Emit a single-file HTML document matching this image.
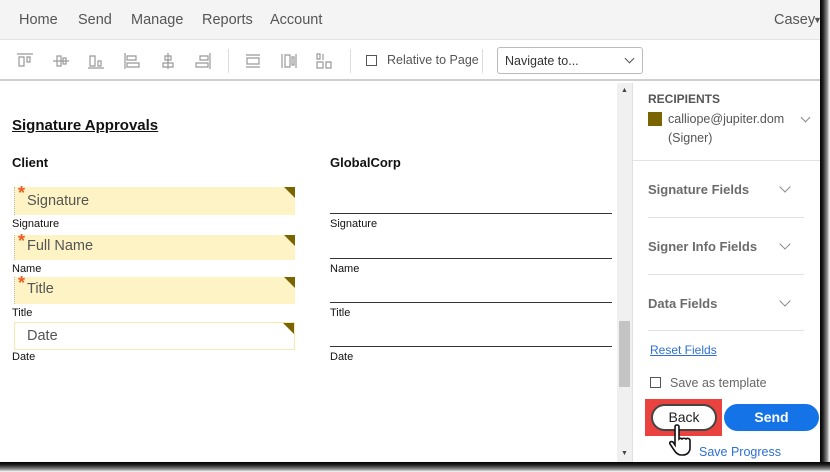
<!DOCTYPE html>
<html><head><style>
*{margin:0;padding:0;box-sizing:border-box}
body{width:830px;height:472px;background:#fff;font-family:"Liberation Sans",sans-serif;position:relative;overflow:hidden}
.abs{position:absolute}
.nav{left:0;top:0;width:822px;height:40px;background:#f4f4f4;border-bottom:1px solid #e2e2e2}
.nav span{position:absolute;top:12px;font-size:14.5px;color:#555}
.tb{left:0;top:40px;width:822px;height:41px;background:#fff;border-bottom:2px solid #cfcfcf}
.ic{position:absolute;top:12px;width:18px;height:18px;color:#999}
.doc{left:0;top:83px;width:617px;height:380px;background:#fff}
.lbl{position:absolute;font-size:11px;color:#111}
.fld{position:absolute;left:14px;width:281px;background:#fdf3c4;font-size:14.5px;color:#555;padding-left:12px;border-left:1px dotted #bbb}
.fld:after{content:"";position:absolute;right:0;top:0;border-top:11px solid #7a6400;border-left:11px solid transparent}
.star{position:absolute;left:3px;top:-4px;color:#f05a22;font-size:18px;font-weight:bold}
.line{position:absolute;left:330px;width:282px;border-top:1px solid #333}
.sb{left:617px;top:83px;width:15px;height:380px;background:#f0f0f0}
.panel{left:632px;top:83px;width:190px;height:380px;background:#fff;border-left:1px solid #e0e0e0}
.sec{position:absolute;left:15px;font-size:13px;font-weight:bold;color:#6b6b6b}
.chev{position:absolute;left:148px;width:8px;height:8px;border-right:1.5px solid #888;border-bottom:1.5px solid #888;transform:rotate(45deg)}
.hr{position:absolute;left:15px;width:156px;border-top:1px solid #e2e2e2}
</style></head><body>
<div class="abs nav">
<span style="left:19px">Home</span><span style="left:78px">Send</span><span style="left:131px">Manage</span><span style="left:202px">Reports</span><span style="left:270px">Account</span>
<span style="left:774px">Casey</span><span style="left:813px;top:15px;font-size:9px">▼</span>
</div>
<div class="abs tb">
<svg class="ic" style="left:16px" viewBox="0 0 18 18" fill="none" stroke="#999" stroke-width="1.2"><path d="M1 2h16M3 5h5v9H3zM11 5h3v5h-3z"/></svg>
<svg class="ic" style="left:52px" viewBox="0 0 18 18" fill="none" stroke="#999" stroke-width="1.2"><path d="M1 9h16M5 4h4v10H5zM11 6h3v6h-3z"/></svg>
<svg class="ic" style="left:87px" viewBox="0 0 18 18" fill="none" stroke="#999" stroke-width="1.2"><path d="M1 16h16M3 4h5v10H3zM11 9h3v5h-3z"/></svg>
<svg class="ic" style="left:123px" viewBox="0 0 18 18" fill="none" stroke="#999" stroke-width="1.2"><path d="M2 1v16M4 4h9v4H4zM4 11h12v4H4z"/></svg>
<svg class="ic" style="left:159px" viewBox="0 0 18 18" fill="none" stroke="#999" stroke-width="1.2"><path d="M9 1v16M6 4h6v4H6zM4 11h10v4H4z"/></svg>
<svg class="ic" style="left:194px" viewBox="0 0 18 18" fill="none" stroke="#999" stroke-width="1.2"><path d="M16 1v16M6 4h8v4H6zM2 11h12v4H2z"/></svg>
<div class="abs" style="left:228px;top:9px;height:24px;border-left:1px solid #ddd"></div>
<svg class="ic" style="left:244px" viewBox="0 0 18 18" fill="none" stroke="#999" stroke-width="1.2"><path d="M2 3h14M2 15h14M3 6h12v6H3z"/></svg>
<svg class="ic" style="left:280px" viewBox="0 0 18 18" fill="none" stroke="#999" stroke-width="1.2"><path d="M2 2v14M16 2v14M5 3h5v12H5zM12 5h2v8h-2z"/></svg>
<svg class="ic" style="left:315px" viewBox="0 0 18 18" fill="none" stroke="#999" stroke-width="1.2"><path d="M2 2h3v5H2zM2 10h6v6H2zM8 2v6M11 10h5v6h-5z"/></svg>
<div class="abs" style="left:350px;top:9px;height:24px;border-left:1px solid #ddd"></div>
<div class="abs" style="left:366px;top:15px;width:11px;height:11px;border:1.5px solid #555"></div>
<div class="abs" style="left:387px;top:13px;font-size:12.5px;color:#555">Relative to Page</div>
<div class="abs" style="left:482px;top:9px;height:24px;border-left:1px solid #ddd"></div>
<div class="abs" style="left:497px;top:7px;width:146px;height:27px;border:1px solid #bbb;border-radius:3px;font-size:12.5px;color:#333;padding:6px 0 0 7px">Navigate to...</div>
<div class="abs" style="left:626px;top:15px;width:7px;height:7px;border-right:1.5px solid #555;border-bottom:1.5px solid #555;transform:rotate(45deg)"></div>
</div>
<div class="abs doc">
<div class="lbl" style="left:12px;top:34px;font-size:15px;font-weight:bold;text-decoration:underline">Signature Approvals</div>
<div class="lbl" style="left:12px;top:72px;font-size:13px;font-weight:bold">Client</div>
<div class="lbl" style="left:330px;top:72px;font-size:13px;font-weight:bold">GlobalCorp</div>
<div class="fld" style="top:104px;height:28px;padding-top:6px"><span class="star">*</span>Signature</div>
<div class="lbl" style="left:12px;top:135px">Signature</div>
<div class="fld" style="top:152px;height:25px;padding-top:3px"><span class="star">*</span>Full Name</div>
<div class="lbl" style="left:12px;top:180px">Name</div>
<div class="fld" style="top:194px;height:27px;padding-top:4px"><span class="star">*</span>Title</div>
<div class="lbl" style="left:12px;top:224px">Title</div>
<div class="fld" style="top:239px;height:28px;padding-top:5px;background:#fff;border:1px solid #f5e9b0;padding-left:12px">Date</div>
<div class="lbl" style="left:12px;top:268px">Date</div>
<div class="line" style="top:130px"></div><div class="lbl" style="left:330px;top:135px">Signature</div>
<div class="line" style="top:175px"></div><div class="lbl" style="left:330px;top:180px">Name</div>
<div class="line" style="top:219px"></div><div class="lbl" style="left:330px;top:224px">Title</div>
<div class="line" style="top:263px"></div><div class="lbl" style="left:330px;top:268px">Date</div>
</div>
<div class="abs sb"><div class="abs" style="left:4px;top:4px;font-size:7px;color:#444">▲</div><div class="abs" style="left:2px;top:238px;width:11px;height:66px;background:#c4c4c4"></div><div class="abs" style="left:4px;top:367px;font-size:7px;color:#444">▼</div></div>
<div class="abs panel">
<div class="sec" style="top:9px;font-size:12px;color:#555">RECIPIENTS</div>
<div class="abs" style="left:15px;top:29px;width:14px;height:14px;background:#7a6400"></div>
<div class="abs" style="left:35px;top:27px;font-size:12.5px;color:#555;line-height:19px">calliope@jupiter.dom<br>(Signer)</div>
<div class="chev" style="left:169px;top:31px;width:7px;height:7px"></div>
<div class="abs" style="left:0;top:77px;width:189px;border-top:1px solid #e2e2e2"></div>
<div class="sec" style="top:99px">Signature Fields</div><div class="chev" style="top:100px"></div>
<div class="hr" style="top:134px"></div>
<div class="sec" style="top:156px">Signer Info Fields</div><div class="chev" style="top:157px"></div>
<div class="hr" style="top:191px"></div>
<div class="sec" style="top:213px">Data Fields</div><div class="chev" style="top:214px"></div>
<div class="hr" style="top:247px"></div>
<div class="abs" style="left:17px;top:260px;font-size:12px;color:#2d6fd6;text-decoration:underline">Reset Fields</div>
<div class="abs" style="left:17px;top:294px;width:11px;height:11px;border:1.5px solid #555"></div>
<div class="abs" style="left:37px;top:293px;font-size:12.5px;color:#666">Save as template</div>
<div class="abs" style="left:12px;top:316px;width:77px;height:37px;background:#e9423f"></div>
<div class="abs" style="left:18px;top:321px;width:66px;height:27px;background:#fff;border:2px solid #444;border-radius:14px;font-size:14px;color:#222;text-align:center;padding-top:3px">Back</div>
<div class="abs" style="left:91px;top:321px;width:95px;height:27px;background:#1473e6;border-radius:14px;font-size:14px;font-weight:bold;color:#fff;text-align:center;padding-top:5px">Send</div>
<svg class="abs" style="left:36px;top:340px" width="28" height="34" viewBox="0 0 28 34"><path d="M8 2c2 0 2 1 2 3v11c1-1 2-1 3 0 1-1 3-1 4 0 1-1 3-1 4 1v8c0 4-3 7-7 7h-2c-3 0-5-2-7-5l-4-6c-1-2 1-3 3-2l2 3V5c0-2 0-3 2-3z" fill="#fff" stroke="#111" stroke-width="1.6"/></svg>
<div class="abs" style="left:66px;top:362px;font-size:12.5px;color:#2d6fd6">Save Progress</div>
</div>
<div class="abs" style="left:820px;top:0;width:10px;height:472px;background:linear-gradient(90deg,#000 0,#222 30%,#888 70%,#fff)"></div>
<div class="abs" style="left:0;top:462px;width:830px;height:10px;background:linear-gradient(180deg,#000 0,#222 30%,#888 70%,#fff)"></div>
</body></html>
